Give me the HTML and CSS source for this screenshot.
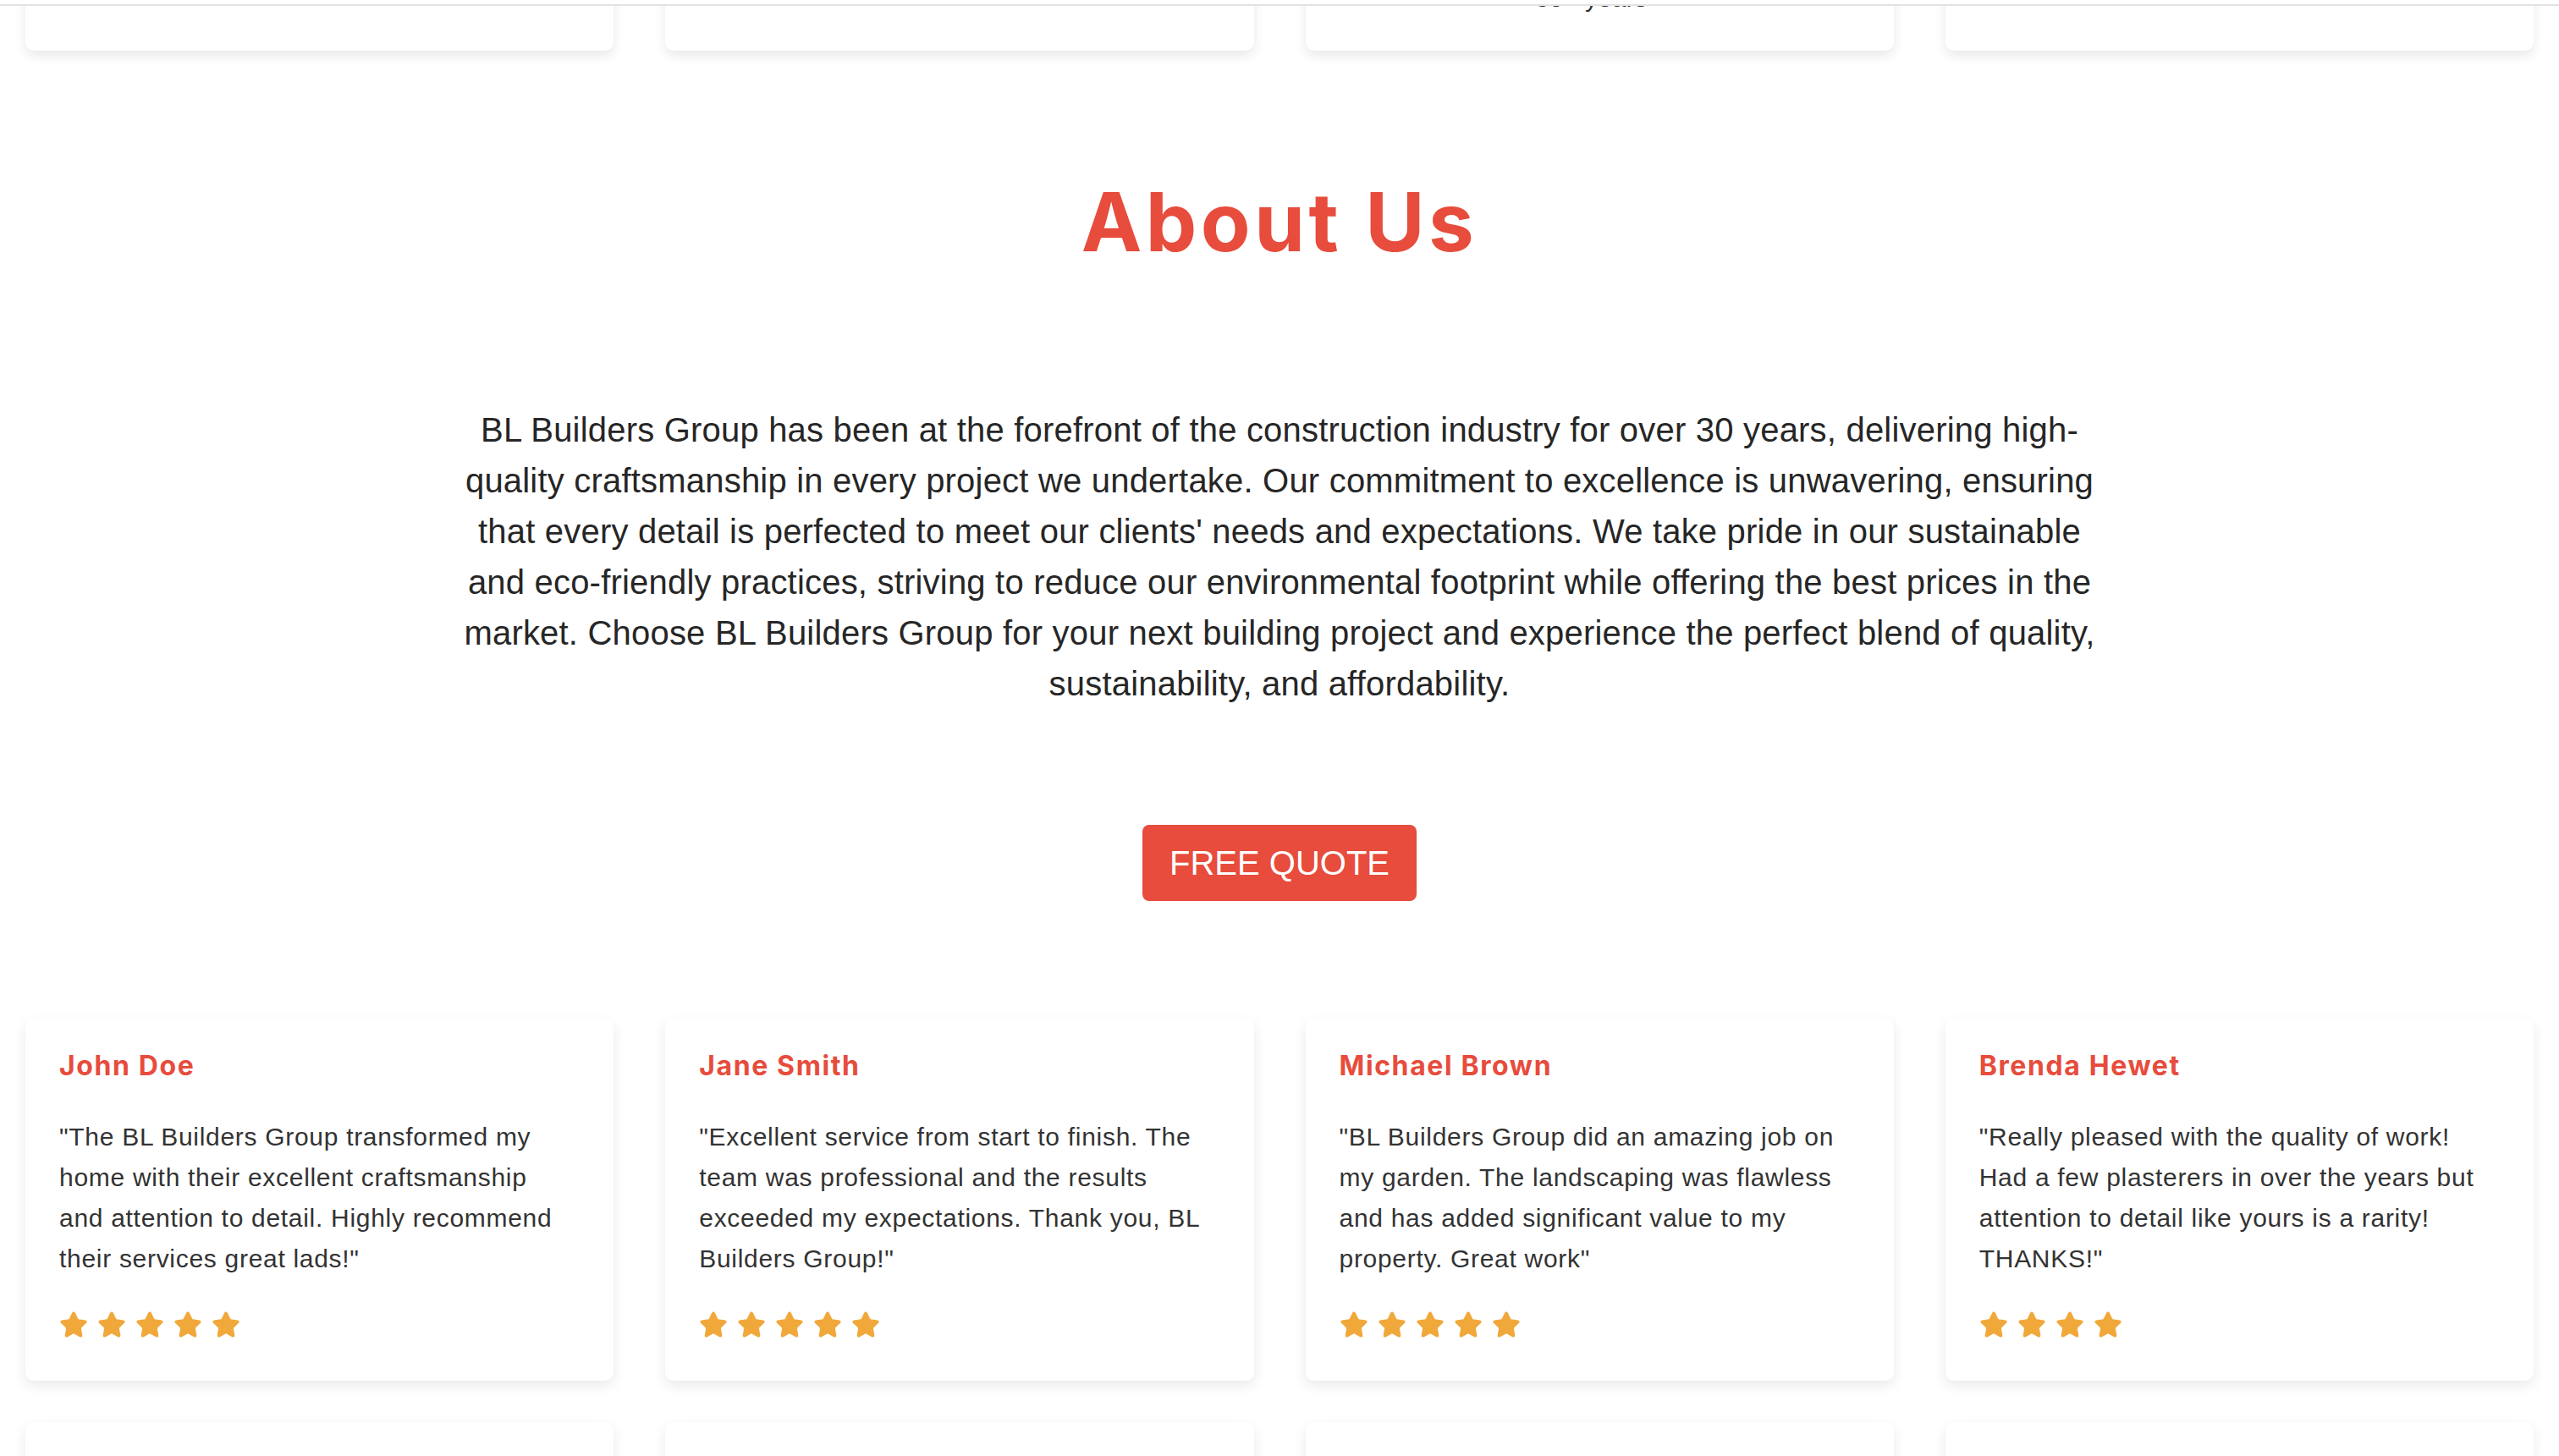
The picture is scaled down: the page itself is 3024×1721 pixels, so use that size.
FILE: index.html
```html
<!DOCTYPE html>
<html lang="en">
<head>
<meta charset="utf-8">
<title>BL Builders Group - About Us</title>
<link rel="stylesheet" href="styles.css">
</head>
<body>
<header class="site-header"></header>

<section class="features">
  <div class="feature-card"></div>
  <div class="feature-card"></div>
  <div class="feature-card"><p class="feature-text">30+ years</p></div>
  <div class="feature-card"></div>
</section>

<section class="about">
  <h2 class="about-title">About Us</h2>
  <p class="about-text">BL Builders Group has been at the forefront of the construction industry for over 30 years, delivering high-quality craftsmanship in every project we undertake. Our commitment to excellence is unwavering, ensuring that every detail is perfected to meet our clients' needs and expectations. We take pride in our sustainable and eco-friendly practices, striving to reduce our environmental footprint while offering the best prices in the market. Choose BL Builders Group for your next building project and experience the perfect blend of quality, sustainability, and affordability.</p>
  <a class="quote-btn" href="#">FREE QUOTE</a>
</section>

<svg width="0" height="0" class="defs">
  <defs>
    <symbol id="star" viewBox="0 0 576 512">
      <path d="M316.9 18C311.6 7 300.4 0 288.1 0s-23.4 7-28.8 18L195 150.3 51.4 171.5c-12 1.8-22 10.2-25.7 21.7s-.7 24.2 7.9 32.7L137.8 329 113.2 474.7c-2 12 3 24.2 12.9 31.3s23 8 33.8 2.3l128.3-68.5 128.3 68.5c10.8 5.7 23.9 4.9 33.8-2.3s14.9-19.3 12.9-31.3L438.5 329 542.7 225.9c8.6-8.5 11.7-21.2 7.9-32.7s-13.7-19.9-25.7-21.7L381.2 150.3 316.9 18z"/>
    </symbol>
  </defs>
</svg>

<section class="testimonials">
  <article class="t-card">
    <h3 class="t-name">John Doe</h3>
    <p class="t-quote">"The BL Builders Group transformed my home with their excellent craftsmanship and attention to detail. Highly recommend their services great lads!"</p>
    <div class="stars">
      <svg class="star"><use href="#star"/></svg><svg class="star"><use href="#star"/></svg><svg class="star"><use href="#star"/></svg><svg class="star"><use href="#star"/></svg><svg class="star"><use href="#star"/></svg>
    </div>
  </article>
  <article class="t-card">
    <h3 class="t-name">Jane Smith</h3>
    <p class="t-quote">"Excellent service from start to finish. The team was professional and the results exceeded my expectations. Thank you, BL Builders Group!"</p>
    <div class="stars">
      <svg class="star"><use href="#star"/></svg><svg class="star"><use href="#star"/></svg><svg class="star"><use href="#star"/></svg><svg class="star"><use href="#star"/></svg><svg class="star"><use href="#star"/></svg>
    </div>
  </article>
  <article class="t-card">
    <h3 class="t-name">Michael Brown</h3>
    <p class="t-quote">"BL Builders Group did an amazing job on my garden. The landscaping was flawless and has added significant value to my property. Great work"</p>
    <div class="stars">
      <svg class="star"><use href="#star"/></svg><svg class="star"><use href="#star"/></svg><svg class="star"><use href="#star"/></svg><svg class="star"><use href="#star"/></svg><svg class="star"><use href="#star"/></svg>
    </div>
  </article>
  <article class="t-card">
    <h3 class="t-name">Brenda Hewet</h3>
    <p class="t-quote">"Really pleased with the quality of work! Had a few plasterers in over the years but attention to detail like yours is a rarity! THANKS!"</p>
    <div class="stars">
      <svg class="star"><use href="#star"/></svg><svg class="star"><use href="#star"/></svg><svg class="star"><use href="#star"/></svg><svg class="star"><use href="#star"/></svg>
    </div>
  </article>
  <article class="t-card t-card-empty"></article>
  <article class="t-card t-card-empty"></article>
  <article class="t-card t-card-empty"></article>
  <article class="t-card t-card-empty"></article>
</section>
</body>
</html>
```

FILE: styles.css
```css
html, body {
  margin: 0;
  padding: 0;
  background: #ffffff;
}

body {
  font-family: "Liberation Sans", Arial, Helvetica, sans-serif;
  color: #222;
}

.defs {
  position: absolute;
  width: 0;
  height: 0;
  overflow: hidden;
}

.site-header {
  position: fixed;
  top: 0;
  left: 0;
  right: 0;
  height: 5px;
  background: #ffffff;
  border-bottom: 2px solid #e2e2e2;
  z-index: 10;
}

/* previous section's cards, scrolled mostly out of view */
.features {
  display: grid;
  grid-template-columns: repeat(4, 1fr);
  column-gap: 61px;
  padding: 0 30px;
  margin-top: -300px;
}

.feature-card {
  height: 360px;
  box-sizing: border-box;
  background: #fff;
  border-radius: 10px;
  box-shadow: 0 6px 14px rgba(0, 0, 0, 0.09);
  display: flex;
  flex-direction: column;
  justify-content: flex-end;
  align-items: center;
  padding: 0 40px 38px;
}

.feature-text {
  margin: 0;
  font-size: 30px;
  line-height: 48px;
  color: #333;
  transform: translateX(-10px);
}

.about {
  display: flex;
  flex-direction: column;
  align-items: center;
  text-align: center;
}

.about-title {
  margin: 145px 0 0;
  font-family: Inter, "Open Sans", sans-serif;
  font-weight: 700;
  font-size: 96px;
  line-height: 115px;
  letter-spacing: 4.5px;
  color: #e74c3c;
}

.about-text {
  margin: 158px 0 0;
  max-width: 1944px;
  font-size: 40px;
  line-height: 60px;
  letter-spacing: 0.2px;
  color: #262626;
}

.quote-btn {
  margin-top: 137px;
  display: inline-block;
  background: #e74c3c;
  color: #fff;
  text-decoration: none;
  font-size: 40px;
  line-height: 46px;
  padding: 22px 32px;
  border-radius: 8px;
}

.testimonials {
  display: grid;
  grid-template-columns: repeat(4, 1fr);
  column-gap: 61px;
  row-gap: 49px;
  padding: 0 30px;
  margin-top: 139px;
}

.t-card {
  background: #fff;
  border-radius: 10px;
  box-shadow: 0 6px 16px rgba(0, 0, 0, 0.09);
  padding: 37px 47px 51px 40px;
}

.t-card-empty {
  min-height: 300px;
}

.t-name {
  margin: 0;
  font-family: Inter, "Open Sans", sans-serif;
  font-weight: 700;
  font-size: 32px;
  line-height: 38px;
  letter-spacing: 1.6px;
  color: #e74c3c;
}

.t-quote {
  margin: 41px 0 0;
  font-size: 30px;
  line-height: 48px;
  letter-spacing: 0.7px;
  color: #333;
}

.stars {
  margin-top: 38px;
  display: flex;
  gap: 11px;
  height: 31px;
}

.star {
  width: 34px;
  height: 31px;
  fill: #f1a83b;
}
```
